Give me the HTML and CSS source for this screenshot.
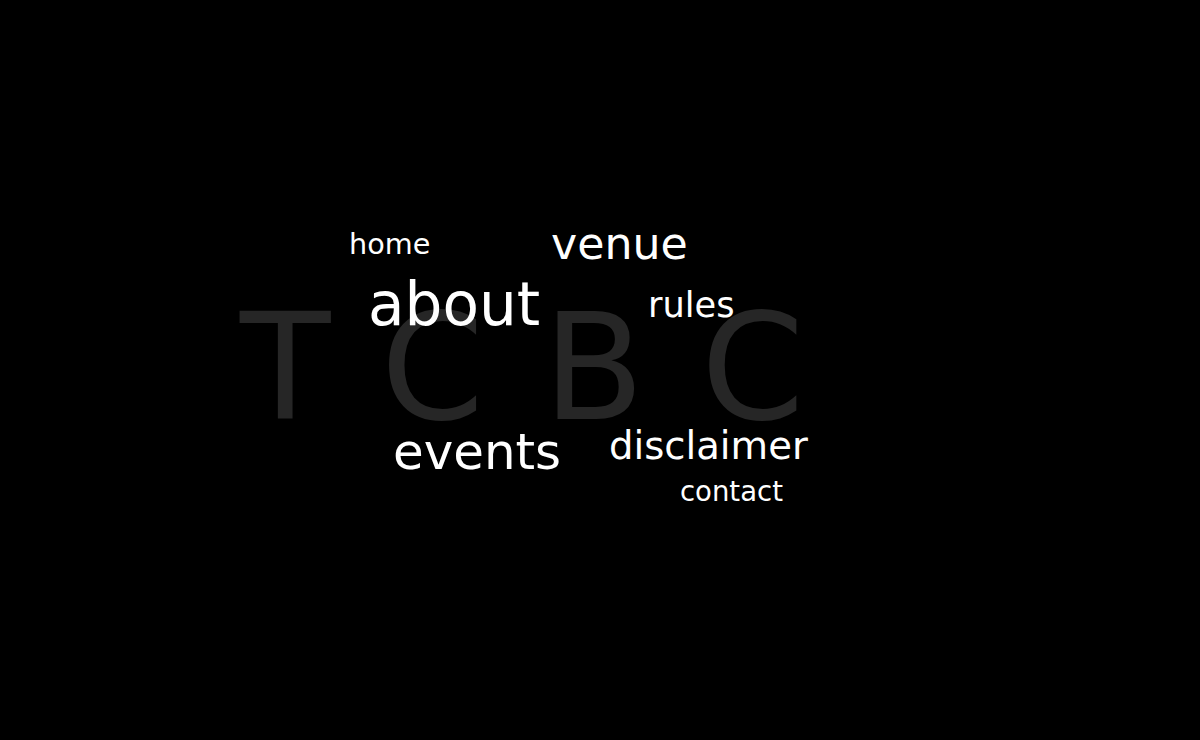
FILE: index.html
```html
<!DOCTYPE html>
<html>
<head>
<meta charset="utf-8">
<link rel="stylesheet" href="styles.css">
</head>
<body>
<div class="stage">
  <div class="logo">TCBC</div>
  <nav class="cloud">
    <a class="w home" href="#">home</a>
    <a class="w venue" href="#">venue</a>
    <a class="w about" href="#">about</a>
    <a class="w rules" href="#">rules</a>
    <a class="w events" href="#">events</a>
    <a class="w disclaimer" href="#">disclaimer</a>
    <a class="w contact" href="#">contact</a>
  </nav>
</div>
</body>
</html>
```
FILE: styles.css
```css
html, body {
  margin: 0;
  padding: 0;
  background: #000;
}
body {
  font-family: "DejaVu Sans", Verdana, sans-serif;
  color: #fff;
}
.stage {
  position: relative;
  width: 1200px;
  height: 740px;
  overflow: hidden;
}
.logo {
  position: absolute;
  left: 240px;
  top: 282px;
  font-size: 148px;
  line-height: normal;
  letter-spacing: 59px;
  color: #262626;
  white-space: nowrap;
}
.cloud .w {
  position: absolute;
  color: #fff;
  text-decoration: none;
  line-height: normal;
  white-space: nowrap;
}
.home { left: 349px; top: 227px; font-size: 28.7px; }
.venue { left: 551px; top: 218px; font-size: 44.3px; }
.about { left: 368px; top: 270px; font-size: 59.7px; }
.rules { left: 648px; top: 284px; font-size: 35.2px; }
.events { left: 393px; top: 423px; font-size: 49.9px; }
.disclaimer { left: 609px; top: 423px; font-size: 38.6px; }
.contact { left: 680px; top: 475px; font-size: 27.5px; }
```
